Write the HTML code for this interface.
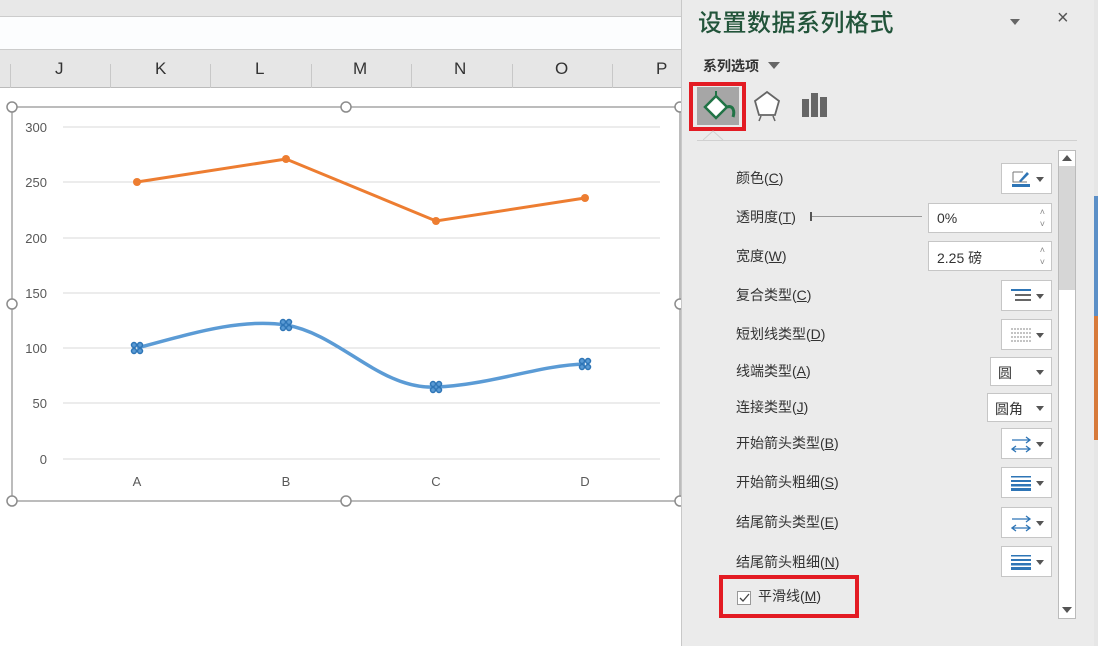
<!DOCTYPE html>
<html><head><meta charset="utf-8"><style>
*{margin:0;padding:0;box-sizing:border-box}
body{width:1098px;height:646px;overflow:hidden;background:#fff;font-family:"Liberation Sans","Noto Sans CJK SC",sans-serif;position:relative}
.abs{position:absolute}
.lbl{position:absolute;left:736px;font-size:14px;color:#333;line-height:18px}
.lbl u{text-decoration:underline}
.btn{position:absolute;left:1001px;width:51px;height:31px;background:#fff;border:1px solid #c6c6c6}
.btn .ar{position:absolute;right:7px;top:13px;width:0;height:0;border-left:4px solid transparent;border-right:4px solid transparent;border-top:5px solid #555}
.inp{position:absolute;left:928px;width:124px;height:30px;background:#fff;border:1px solid #c6c6c6;font-size:14px;color:#333;padding:6px 8px}
.inp .sp{position:absolute;right:6px;top:2px;font-size:9px;color:#888;line-height:12px}
</style></head><body>
<div class="abs" style="left:0;top:0;width:682px;height:17px;background:#e8e8e8;border-bottom:1px solid #ccc"></div>
<div class="abs" style="left:0;top:17px;width:682px;height:33px;background:#fcfdfe;border-bottom:1px solid #ccc"></div>
<div class="abs" style="left:0;top:50px;width:682px;height:38px;background:#e6e6e6;border-bottom:1px solid #bbb"></div>
<div class="abs" style="top:50px;left:0;width:682px;height:38px;font-size:17px;color:#333">
<span class="abs" style="left:55px;top:9px">J</span><span class="abs" style="left:155px;top:9px">K</span><span class="abs" style="left:255px;top:9px">L</span><span class="abs" style="left:353px;top:9px">M</span><span class="abs" style="left:454px;top:9px">N</span><span class="abs" style="left:555px;top:9px">O</span><span class="abs" style="left:656px;top:9px">P</span>
<div class="abs" style="left:10px;top:14px;width:1px;height:24px;background:#c8c8c8"></div><div class="abs" style="left:110px;top:14px;width:1px;height:24px;background:#c8c8c8"></div><div class="abs" style="left:210px;top:14px;width:1px;height:24px;background:#c8c8c8"></div><div class="abs" style="left:311px;top:14px;width:1px;height:24px;background:#c8c8c8"></div><div class="abs" style="left:411px;top:14px;width:1px;height:24px;background:#c8c8c8"></div><div class="abs" style="left:512px;top:14px;width:1px;height:24px;background:#c8c8c8"></div><div class="abs" style="left:612px;top:14px;width:1px;height:24px;background:#c8c8c8"></div>
</div>
<svg class="abs" style="left:0;top:0" width="682" height="646">
<rect x="12" y="107" width="668" height="394" fill="#fff" stroke="#a6a6a6" stroke-width="1.5"/>
<g stroke="#d9d9d9" stroke-width="1">
<line x1="63" y1="127" x2="660" y2="127"/><line x1="63" y1="182" x2="660" y2="182"/><line x1="63" y1="238" x2="660" y2="238"/><line x1="63" y1="293" x2="660" y2="293"/><line x1="63" y1="348" x2="660" y2="348"/><line x1="63" y1="403" x2="660" y2="403"/><line x1="63" y1="459" x2="660" y2="459"/>
</g>
<g font-size="13" fill="#595959" text-anchor="end" font-family="Liberation Sans">
<text x="47" y="132">300</text><text x="47" y="187">250</text><text x="47" y="243">200</text><text x="47" y="298">150</text><text x="47" y="353">100</text><text x="47" y="408">50</text><text x="47" y="464">0</text>
</g>
<g font-size="13" fill="#595959" text-anchor="middle" font-family="Liberation Sans">
<text x="137" y="486">A</text><text x="286" y="486">B</text><text x="436" y="486">C</text><text x="585" y="486">D</text>
</g>
<polyline points="137,182 286,159 436,221 585,198" fill="none" stroke="#ed7d31" stroke-width="3"/>
<g fill="#ed7d31"><circle cx="137" cy="182" r="4"/><circle cx="286" cy="159" r="4"/><circle cx="436" cy="221" r="4"/><circle cx="585" cy="198" r="4"/></g>
<path d="M137,348 C190,334 240,318 286,325 C340,334 380,390 436,387 C490,385 540,365 585,364" fill="none" stroke="#5b9bd5" stroke-width="3.5"/>
<g fill="#5b9bd5" stroke="#2e75b6" stroke-width="1.5">
<g transform="translate(137,348)"><circle cx="-3" cy="-3" r="2.5"/><circle cx="3" cy="-3" r="2.5"/><circle cx="-3" cy="3" r="2.5"/><circle cx="3" cy="3" r="2.5"/></g>
<g transform="translate(286,325)"><circle cx="-3" cy="-3" r="2.5"/><circle cx="3" cy="-3" r="2.5"/><circle cx="-3" cy="3" r="2.5"/><circle cx="3" cy="3" r="2.5"/></g>
<g transform="translate(436,387)"><circle cx="-3" cy="-3" r="2.5"/><circle cx="3" cy="-3" r="2.5"/><circle cx="-3" cy="3" r="2.5"/><circle cx="3" cy="3" r="2.5"/></g>
<g transform="translate(585,364)"><circle cx="-3" cy="-3" r="2.5"/><circle cx="3" cy="-3" r="2.5"/><circle cx="-3" cy="3" r="2.5"/><circle cx="3" cy="3" r="2.5"/></g>
</g>
<g fill="#fff" stroke="#8c8c8c" stroke-width="1.5">
<circle cx="12" cy="107" r="5"/><circle cx="346" cy="107" r="5"/><circle cx="680" cy="107" r="5"/><circle cx="12" cy="304" r="5"/><circle cx="680" cy="304" r="5"/><circle cx="12" cy="501" r="5"/><circle cx="346" cy="501" r="5"/><circle cx="680" cy="501" r="5"/>
</g>
</svg>
<!-- panel -->
<div class="abs" style="left:681px;top:0;width:413px;height:646px;background:#ebebeb;border-left:1px solid #c8c8c8"></div>
<div class="abs" style="left:1094px;top:0;width:4px;height:646px;background:#e6e6e6"></div>
<div class="abs" style="left:1094px;top:196px;width:4px;height:120px;background:#5b8fc7"></div>
<div class="abs" style="left:1094px;top:316px;width:4px;height:124px;background:#d77a3a"></div>
<div class="abs" style="left:698px;top:3px;font-size:24px;color:#22543a;font-weight:500;font-family:'Noto Sans CJK SC',sans-serif;letter-spacing:0.5px">设置数据系列格式</div>
<div class="abs" style="left:1010px;top:19px;border-left:5px solid transparent;border-right:5px solid transparent;border-top:6px solid #666"></div>
<div class="abs" style="left:1057px;top:7px;font-size:20px;color:#555">×</div>
<div class="abs" style="left:703px;top:56px;font-size:14px;font-weight:bold;color:#333">系列选项</div>
<div class="abs" style="left:768px;top:62px;border-left:6px solid transparent;border-right:6px solid transparent;border-top:7px solid #666"></div>
<div class="abs" style="left:689px;top:82px;width:57px;height:49px;border:4px solid #e31b23"></div>
<div class="abs" style="left:697px;top:87px;width:42px;height:38px;background:#a6a6a6"></div>
<svg class="abs" style="left:697px;top:87px" width="42" height="38"><path d="M8,20 L19,9 L30,20 L19,31 Z" fill="#fff" stroke="#217346" stroke-width="2.5"/><path d="M19,9 L19,4" stroke="#217346" stroke-width="2"/><path d="M30,20 C36,18 38,24 36,30" fill="none" stroke="#217346" stroke-width="3"/></svg>
<svg class="abs" style="left:752px;top:88px" width="30" height="34"><path d="M15,4 L27,13 L23,27 L7,27 L3,13 Z" fill="#fff" stroke="#666" stroke-width="1.8"/><path d="M9,28 L7,33 M21,28 L23,33" stroke="#666" stroke-width="1.5"/></svg>
<svg class="abs" style="left:800px;top:90px" width="30" height="30"><rect x="2" y="9" width="7" height="18" fill="#666"/><rect x="11" y="3" width="7" height="24" fill="#666"/><rect x="20" y="7" width="7" height="20" fill="#666"/></svg>
<div class="abs" style="left:697px;top:140px;width:380px;height:1px;background:#d0d0d0"></div>
<svg class="abs" style="left:703px;top:130px" width="22" height="12"><path d="M0,10 L10,1 L20,10" fill="#ebebeb" stroke="#d0d0d0"/></svg>
<!-- scrollbar -->
<div class="abs" style="left:1058px;top:150px;width:18px;height:469px;background:#fff;border:1px solid #bbb"></div>
<div class="abs" style="left:1059px;top:166px;width:16px;height:124px;background:#d6d6d6"></div>
<div class="abs" style="left:1062px;top:155px;border-left:5px solid transparent;border-right:5px solid transparent;border-bottom:6px solid #555"></div>
<div class="abs" style="left:1062px;top:607px;border-left:5px solid transparent;border-right:5px solid transparent;border-top:6px solid #555"></div>
<!-- rows -->
<div class="lbl" style="top:169px">颜色(<u>C</u>)</div>
<div class="btn" style="top:163px"><svg class="abs" style="left:9px;top:5px" width="22" height="20"><path d="M2,3 L12,3 M2,3 L2,13 L16,13" fill="none" stroke="#777" stroke-width="1"/><path d="M8,12 L16,3 L18,5 L10,13 Z" fill="#2e75b6"/><rect x="1" y="15" width="18" height="3" fill="#2e75b6"/></svg><div class="ar"></div></div>
<div class="lbl" style="top:208px">透明度(<u>T</u>)</div>
<div class="abs" style="left:810px;top:212px;width:2px;height:9px;background:#555"></div>
<div class="abs" style="left:812px;top:216px;width:110px;height:1px;background:#999"></div>
<div class="inp" style="top:203px">0%<div class="sp">˄<br>˅</div></div>
<div class="lbl" style="top:247px">宽度(<u>W</u>)</div>
<div class="inp" style="top:241px">2.25 磅<div class="sp">˄<br>˅</div></div>
<div class="lbl" style="top:286px">复合类型(<u>C</u>)</div>
<div class="btn" style="top:280px"><svg class="abs" style="left:9px;top:8px" width="22" height="14"><rect x="0" y="0" width="20" height="2" fill="#2e75b6"/><rect x="4" y="5" width="16" height="2" fill="#666"/><rect x="4" y="10" width="16" height="2" fill="#666"/></svg><div class="ar"></div></div>
<div class="lbl" style="top:325px">短划线类型(<u>D</u>)</div>
<div class="btn" style="top:319px"><svg class="abs" style="left:9px;top:8px" width="22" height="14"><path d="M0,1 H20 M0,5 H20 M0,9 H20 M0,13 H20" stroke="#888" stroke-dasharray="2 1"/></svg><div class="ar"></div></div>
<div class="lbl" style="top:362px">线端类型(<u>A</u>)</div>
<div class="btn" style="top:357px;left:990px;width:62px;height:29px;font-size:14px;padding:5px 7px;color:#333">圆<div class="ar" style="top:12px"></div></div>
<div class="lbl" style="top:398px">连接类型(<u>J</u>)</div>
<div class="btn" style="top:393px;left:987px;width:65px;height:29px;font-size:14px;padding:5px 7px;color:#333">圆角<div class="ar" style="top:12px"></div></div>
<div class="lbl" style="top:434px">开始箭头类型(<u>B</u>)</div>
<div class="btn" style="top:428px"><svg class="abs" style="left:9px;top:7px" width="22" height="18"><path d="M1,4 H19 M15,1 L19,4 L15,7 M1,13 H19 M5,10 L1,13 L5,16 M15,10 L19,13 L15,16" fill="none" stroke="#2e75b6" stroke-width="1.3"/></svg><div class="ar"></div></div>
<div class="lbl" style="top:473px">开始箭头粗细(<u>S</u>)</div>
<div class="btn" style="top:467px"><svg class="abs" style="left:9px;top:8px" width="22" height="16"><rect x="0" y="0" width="20" height="1.5" fill="#2e75b6"/><rect x="0" y="4" width="20" height="2" fill="#2e75b6"/><rect x="0" y="8" width="20" height="2.5" fill="#2e75b6"/><rect x="0" y="12" width="20" height="3" fill="#2e75b6"/></svg><div class="ar"></div></div>
<div class="lbl" style="top:513px">结尾箭头类型(<u>E</u>)</div>
<div class="btn" style="top:507px"><svg class="abs" style="left:9px;top:7px" width="22" height="18"><path d="M1,4 H19 M15,1 L19,4 L15,7 M1,13 H19 M5,10 L1,13 L5,16 M15,10 L19,13 L15,16" fill="none" stroke="#2e75b6" stroke-width="1.3"/></svg><div class="ar"></div></div>
<div class="lbl" style="top:553px">结尾箭头粗细(<u>N</u>)</div>
<div class="btn" style="top:546px"><svg class="abs" style="left:9px;top:8px" width="22" height="16"><rect x="0" y="0" width="20" height="1.5" fill="#2e75b6"/><rect x="0" y="4" width="20" height="2" fill="#2e75b6"/><rect x="0" y="8" width="20" height="2.5" fill="#2e75b6"/><rect x="0" y="12" width="20" height="3" fill="#2e75b6"/></svg><div class="ar"></div></div>
<div class="abs" style="left:719px;top:575px;width:140px;height:43px;border:4px solid #e31b23"></div>
<div class="abs" style="left:737px;top:591px;width:14px;height:14px;background:#fff;border:1px solid #999"></div>
<svg class="abs" style="left:739px;top:593px" width="11" height="11"><path d="M1,5 L4,8 L10,1" fill="none" stroke="#444" stroke-width="1.3"/></svg>
<div class="lbl" style="left:758px;top:587px">平滑线(<u>M</u>)</div>
</body></html>
